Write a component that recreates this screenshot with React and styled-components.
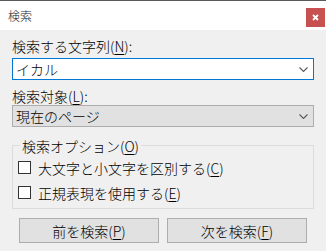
import React from 'react'
import styled, { createGlobalStyle } from 'styled-components'

const GlobalStyle = createGlobalStyle`
    html, body {
        margin: 0;
        padding: 0;
        background: #f0f0f0;
    }
    body {
        font-family: "Noto Sans CJK JP", "Noto Sans", sans-serif;
        font-weight: 300;
        color: #000;
    }
    u {
        text-underline-offset: 2px;
    }
`

//styled components
const Window = styled.div`
    display: flex;
    flex-direction: column;
    width: 326px;
    height: 251px;
    background: #f0f0f0;
    overflow: hidden;
`

const TitleBar = styled.div`
    display: flex;
    justify-content: space-between;
    height: 29px;
    border-top: 1px solid #5a5a5a;
    background: #fff;
`

const Title = styled.span`
    padding: 6px 0 0 8px;
    font-size: 12px;
    line-height: 18px;
    color: #1a1a1a;
`

const CloseButton = styled.div`
    display: flex;
    align-items: center;
    justify-content: center;
    width: 19px;
    height: 19px;
    margin: 7px 1px 0 0;
    background: #c75050;
`

const Body = styled.div`
    display: flex;
    flex-direction: column;
    padding: 7px 12px 0;
`

const Label = styled.div`
    font-size: 14px;
    line-height: 18px;
    margin-top: ${({ $gap }) => $gap || 0}px;
    margin-bottom: ${({ $below }) => $below || 0}px;
`

const Combo = styled.div`
    display: flex;
    align-items: center;
    justify-content: space-between;
    box-sizing: border-box;
    height: 22px;
    padding: 0 5px 0 3px;
    font-size: 14px;
    border: 1px solid ${({ $editable }) => ($editable ? '#0078d7' : '#adadad')};
    background: ${({ $editable }) => ($editable ? '#fff' : '#e1e1e1')};
`

const GroupBox = styled.fieldset`
    margin: 8px 0 0;
    padding: 0 5px 3px;
    min-width: 0;
    border: 1px solid #dcdcdc;
    width: 302px;
    box-sizing: border-box;

    legend {
        margin-left: 2px;
        padding: 2px 2px 0;
        font-size: 14px;
        line-height: 18px;
    }
`

const CheckRow = styled.label`
    display: flex;
    align-items: center;
    gap: 7px;
    height: 25px;
    font-size: 14px;
`

const Box = styled.span`
    width: 13px;
    height: 13px;
    box-sizing: border-box;
    border: 1px solid #333;
    background: #fff;
`

const ButtonRow = styled.div`
    display: flex;
    gap: 8px;
    margin-top: 9px;
    padding-left: 7px;
`

const Button = styled.div`
    display: flex;
    align-items: center;
    justify-content: center;
    box-sizing: border-box;
    width: 140px;
    height: 25px;
    font-size: 14px;
    background: #e1e1e1;
    border: 1px solid #adadad;
`

const Chevron = () => (
    <svg width="9" height="5" viewBox="0 0 9 5">
        <polyline points="0.5,0.5 4.5,4.5 8.5,0.5" fill="none" stroke="#5a5a5a" strokeWidth="1.1" />
    </svg>
)

const App = () => (
    <>
        <GlobalStyle />
        <Window>
            <TitleBar>
                <Title>検索</Title>
                <CloseButton>
                    <svg width="7" height="7" viewBox="0 0 7 7">
                        <path d="M1 1L6 6M6 1L1 6" stroke="#fff" strokeWidth="1.8" />
                    </svg>
                </CloseButton>
            </TitleBar>
            <Body>
                <Label $below={3}>検索する文字列(<u>N</u>):</Label>
                <Combo $editable>
                    <span>イカル</span>
                    <Chevron />
                </Combo>
                <Label $gap={7}>検索対象(<u>L</u>):</Label>
                <Combo>
                    <span>現在のページ</span>
                    <Chevron />
                </Combo>
                <GroupBox>
                    <legend>検索オプション(<u>O</u>)</legend>
                    <CheckRow>
                        <Box />
                        <span>大文字と小文字を区別する(<u>C</u>)</span>
                    </CheckRow>
                    <CheckRow>
                        <Box />
                        <span>正規表現を使用する(<u>E</u>)</span>
                    </CheckRow>
                </GroupBox>
                <ButtonRow>
                    <Button><span>前を検索(<u>P</u>)</span></Button>
                    <Button><span>次を検索(<u>F</u>)</span></Button>
                </ButtonRow>
            </Body>
        </Window>
    </>
)

export default App
